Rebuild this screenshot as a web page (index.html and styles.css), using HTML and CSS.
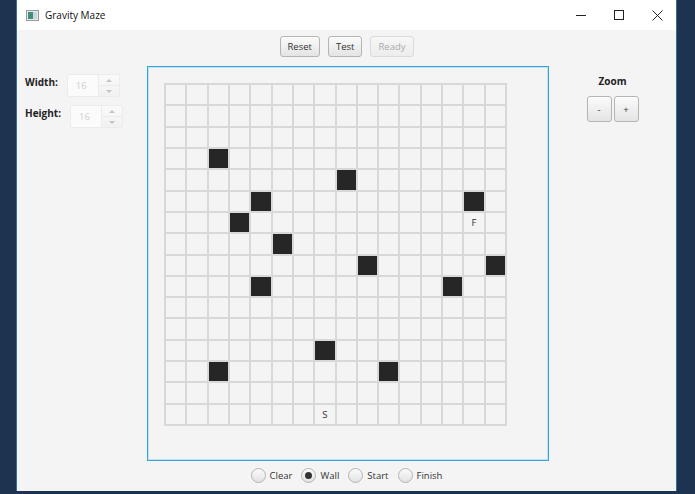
FILE: index.html
```html
<!DOCTYPE html>
<html lang="en">
<head>
    <meta charset="UTF-8">
    <title>Gravity Maze</title>
    <link rel="stylesheet" href="styles.css">
</head>
<body>
    <div class="window">
        <div class="titlebar">
            <svg class="app-icon" width="13" height="11" viewBox="0 0 13 11">
                <rect x="0.5" y="0.5" width="12" height="10" fill="#e8e8e8" stroke="#9a9a9a"/>
                <rect x="2" y="2" width="5" height="7" fill="#3f8f7a"/>
                <rect x="7" y="2" width="4" height="7" fill="#c9d6e0"/>
            </svg>
            <span class="title">Gravity Maze</span>
            <div class="controls">
                <div class="ctl">
                    <svg width="10" height="10" viewBox="0 0 10 10"><path d="M0 5.5h10" stroke="#222" stroke-width="1"/></svg>
                </div>
                <div class="ctl">
                    <svg width="10" height="10" viewBox="0 0 10 10"><rect x="0.5" y="0.5" width="9" height="9" fill="none" stroke="#222"/></svg>
                </div>
                <div class="ctl">
                    <svg width="11" height="11" viewBox="0 0 11 11"><path d="M0.5 0.5l10 10M10.5 0.5l-10 10" stroke="#222" stroke-width="1"/></svg>
                </div>
            </div>
        </div>

        <div class="content">
            <div class="toolbar">
                <button class="btn">Reset</button>
                <button class="btn">Test</button>
                <button class="btn" disabled>Ready</button>
            </div>

            <div class="side-left">
                <div class="field">
                    <span class="label">Width:</span>
                    <div class="spinner">
                        <span class="spin-value">16</span>
                        <div class="spin-arrows">
                            <span class="arrow up"></span>
                            <span class="arrow down"></span>
                        </div>
                    </div>
                </div>
                <div class="field">
                    <span class="label">Height:</span>
                    <div class="spinner">
                        <span class="spin-value">16</span>
                        <div class="spin-arrows">
                            <span class="arrow up"></span>
                            <span class="arrow down"></span>
                        </div>
                    </div>
                </div>
            </div>

            <div class="board-panel">
                <div class="board" id="board"></div>
            </div>

            <div class="side-right">
                <div class="label">Zoom</div>
                <div class="zoom-btns">
                    <button class="btn small">-</button>
                    <button class="btn small">+</button>
                </div>
            </div>

            <div class="modes">
                <label class="radio"><span class="dot"></span>Clear</label>
                <label class="radio checked"><span class="dot"></span>Wall</label>
                <label class="radio"><span class="dot"></span>Start</label>
                <label class="radio"><span class="dot"></span>Finish</label>
            </div>
        </div>
    </div>

    <script>
        const board = document.getElementById('board');
        const walls = [[3,2],[4,8],[5,4],[5,14],[6,3],[7,5],[8,9],[8,15],[9,4],[9,13],[12,7],[13,2],[13,10]];
        const marks = { '6,14': 'F', '15,7': 'S' };

        for (let r = 0; r < 16; r++) {
            for (let c = 0; c < 16; c++) {
                const cell = document.createElement('div');
                cell.className = 'cell';
                if (walls.some(w => w[0] === r && w[1] === c)) {
                    cell.classList.add('wall');
                }
                if (marks[r + ',' + c]) {
                    cell.textContent = marks[r + ',' + c];
                }
                board.appendChild(cell);
            }
        }
    </script>
</body>
</html>
```

FILE: styles.css
```css
body {
    margin: 0;
    background: #1c344f;
    font-family: 'Open Sans', 'Liberation Sans', sans-serif;
    font-size: 9.5px;
    color: #333;
}
.window {
    width: 659px;
    height: 491px;
    margin-left: 16px;
    display: flex;
    flex-direction: column;
    background: #f4f4f4;
    border-left: 1px solid #3b6d95;
    border-right: 1px solid #3b6d95;
}
.titlebar {
    height: 30px;
    background: #fff;
    display: flex;
    align-items: center;
    padding-left: 9px;
}
.app-icon {
    margin-right: 6px;
}
.title {
    font-size: 10px;
    color: #111;
}
.controls {
    margin-left: auto;
    display: flex;
    height: 100%;
}
.ctl {
    width: 38px;
    display: flex;
    align-items: center;
    justify-content: center;
}
.content {
    flex: 1;
    display: grid;
    grid-template-columns: 130px 402px 1fr;
    grid-template-rows: 36px 395px 1fr;
}
.toolbar {
    grid-column: 1 / 4;
    display: flex;
    justify-content: center;
    align-items: flex-start;
    gap: 8px;
    padding-top: 6px;
}
.btn {
    font-family: inherit;
    font-size: 9.5px;
    color: #333;
    height: 21px;
    padding: 0 7px;
    border: 1px solid #b4b4b4;
    border-radius: 3px;
    background: linear-gradient(#fbfbfb, #e4e4e4);
    box-shadow: inset 0 1px 0 #fff;
}
.btn:disabled {
    opacity: 0.4;
}
.btn.small {
    width: 25px;
    height: 26px;
    padding: 0;
}
.side-left {
    padding: 8px 0 0 8px;
    display: flex;
    flex-direction: column;
    gap: 8px;
}
.field {
    display: flex;
    gap: 9px;
}
.label {
    font-weight: bold;
    font-size: 10px;
    color: #222;
    padding-top: 1px;
}
.spinner {
    display: flex;
    height: 21px;
    width: 51px;
    border: 1px solid #ececec;
    border-radius: 2px;
    background: #fbfbfb;
}
.spin-value {
    flex: 1;
    color: #cfcfcf;
    padding: 4px 0 0 8px;
}
.spin-arrows {
    width: 20px;
    display: flex;
    flex-direction: column;
    border-left: 1px solid #ececec;
    background: linear-gradient(#fafafa, #f1f1f1);
}
.arrow {
    flex: 1;
    display: flex;
    align-items: center;
    justify-content: center;
}
.arrow.up {
    border-bottom: 1px solid #ececec;
}
.arrow::after {
    content: '';
    border-left: 3px solid transparent;
    border-right: 3px solid transparent;
}
.arrow.up::after {
    border-bottom: 3px solid #c4c4c4;
}
.arrow.down::after {
    border-top: 3px solid #c4c4c4;
}
.board-panel {
    border: 1px solid #36a4dc;
    box-shadow: inset 0 0 0 1px #bfe3f4;
    padding: 16px;
}
.board {
    width: 343px;
    height: 343px;
    box-sizing: border-box;
    padding: 2px;
    background: #d8d8d8;
    display: grid;
    grid-template-columns: repeat(16, 1fr);
    grid-template-rows: repeat(16, 1fr);
    gap: 2px;
}
.cell {
    background: #f4f4f4;
    display: flex;
    align-items: center;
    justify-content: center;
    font-size: 9.5px;
    color: #333;
}
.cell.wall {
    background: #262626;
}
.side-right {
    display: flex;
    flex-direction: column;
    align-items: center;
    padding-top: 7px;
}
.zoom-btns {
    display: flex;
    gap: 2px;
    margin-top: 8px;
}
.modes {
    grid-column: 1 / 4;
    display: flex;
    justify-content: center;
    align-items: center;
    gap: 9px;
    padding-bottom: 2px;
}
.radio {
    display: flex;
    align-items: center;
    gap: 4px;
    color: #333;
}
.dot {
    width: 13px;
    height: 13px;
    border: 1px solid #b4b4b4;
    border-radius: 50%;
    background: linear-gradient(#fbfbfb, #e2e2e2);
    display: flex;
    align-items: center;
    justify-content: center;
}
.radio.checked .dot::after {
    content: '';
    width: 7px;
    height: 7px;
    border-radius: 50%;
    background: #333;
}
```
